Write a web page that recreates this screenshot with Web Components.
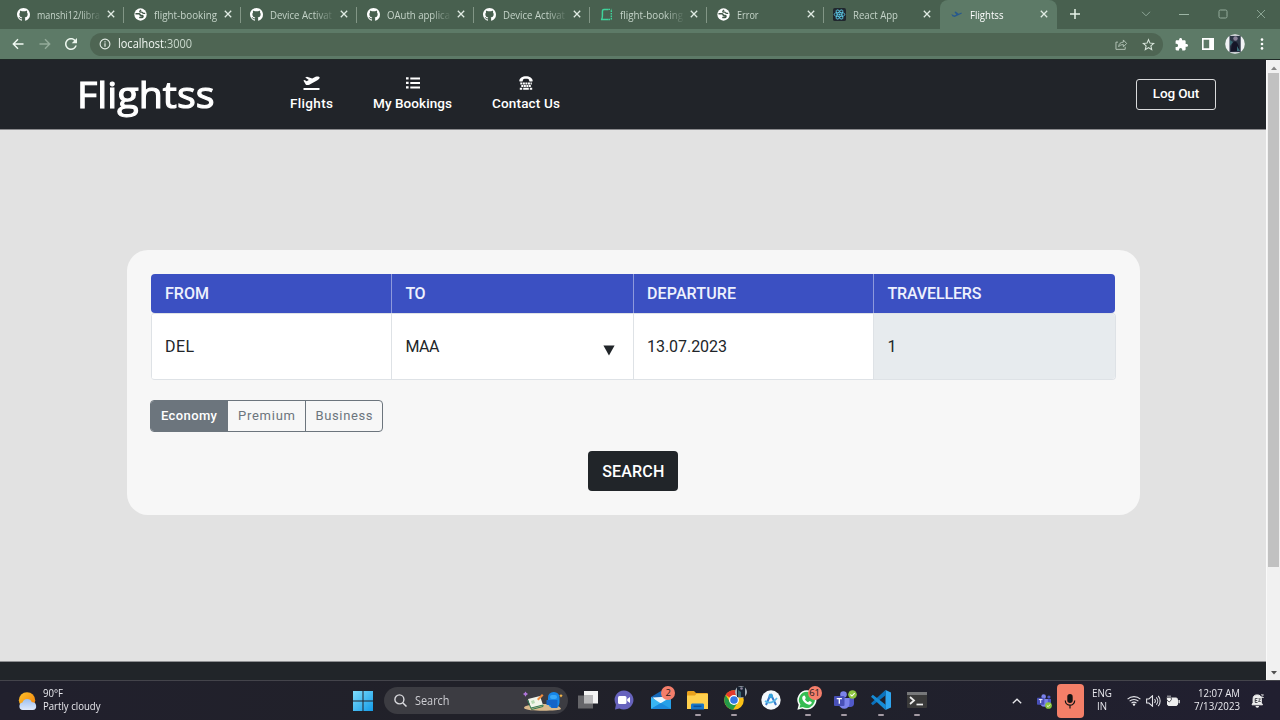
<!DOCTYPE html>
<html lang="en">
<head>
<meta charset="utf-8">
<title>Flightss</title>
<style>
html,body{margin:0;height:100%;overflow:hidden}
body{font-family:"Open Sans","Noto Sans",sans-serif;background:#e2e2e2}
</style>
</head>
<body>
<desktop-screen></desktop-screen>
<script>
const ICONS = {
github:['0 0 16 16','<path fill="#fff" d="M8 0C3.58 0 0 3.58 0 8c0 3.54 2.29 6.53 5.47 7.59.4.07.55-.17.55-.38 0-.19-.01-.82-.01-1.49-2.01.37-2.53-.49-2.69-.94-.09-.23-.48-.94-.82-1.13-.28-.15-.68-.52-.01-.53.63-.01 1.08.58 1.23.82.72 1.21 1.87.87 2.33.66.07-.52.28-.87.51-1.07-1.78-.2-3.64-.89-3.64-3.95 0-.87.31-1.59.82-2.15-.08-.2-.36-1.02.08-2.12 0 0 .67-.21 2.2.82a7.6 7.6 0 0 1 4 0c1.53-1.04 2.2-.82 2.2-.82.44 1.1.16 1.92.08 2.12.51.56.82 1.27.82 2.15 0 3.07-1.87 3.75-3.65 3.95.29.25.54.73.54 1.48 0 1.07-.01 1.93-.01 2.2 0 .21.15.46.55.38A8 8 0 0 0 16 8c0-4.42-3.58-8-8-8z"/>'],
globe:['0 0 16 16','<circle cx="8" cy="8" r="7.6" fill="#fff"/><path d="M1.800 7.200h4.400c1.300 0 1.300 2.200 2.600 2.200h1.400c1.400 0 1 2.300-.6 2.300H6.400" fill="none" stroke="#43594a" stroke-width="1.900"/><path d="M8.800 2.400C6.400 4 6.800 5.100 8.400 5.100h1.200c.8 0 .8 1.500 2.300 1.500h1.900" fill="none" stroke="#43594a" stroke-width="1.700"/>'],
glitch:['0 0 14 14','<path d="M9 1.5H4.5C2.5 1.5 2.6 3 2.6 5v2.5c0 3-.5 4.8-1.6 4.8h8" fill="none" stroke="#3fd39b" stroke-width="1.6"/><path d="M9 1.500h3.300M12.2 2.500v10M9 12.4h3" fill="none" stroke="#3fd39b" stroke-width="1.5" stroke-dasharray="1.8 1"/>'],
react:['0 0 14 14','<rect width="14" height="14" rx="2" fill="#20272e"/><g fill="none" stroke="#5ccbea" stroke-width=".9"><ellipse cx="7" cy="7" rx="5.7" ry="2.2"/><ellipse cx="7" cy="7" rx="5.7" ry="2.2" transform="rotate(60 7 7)"/><ellipse cx="7" cy="7" rx="5.7" ry="2.2" transform="rotate(120 7 7)"/></g><circle cx="7" cy="7" r="1.2" fill="#5ccbea"/>'],
planefav:['0 0 14 14','<path d="M1.500 6.5 4.500 8l2.300-.8-2-3 1.300-.4L9.300 6.200l2.500-1c.9-.4 1.6.2.5.9L5 9.8 2.500 9z" fill="#27598e"/>'],
x:['0 0 10 10','<path d="m1.8 1.8 6.4 6.4M8.2 1.800 1.8 8.200" stroke="currentColor" stroke-width="1.3"/>'],
plus:['0 0 10 10','<path d="M5 0v10M0 5h10" stroke="#e6f2e8" stroke-width="1.5"/>'],
chev:['0 0 10 6','<path d="m1 .8 4 4 4-4" fill="none" stroke="#8da696"/>'],
min:['0 0 10 10','<path d="M0 5.5h10" stroke="#9db5a5" stroke-width="1"/>'],
max:['0 0 10 10','<rect x="1" y="1" width="8" height="8" rx="1.4" fill="none" stroke="#93ab9b"/>'],
close:['0 0 10 10','<path d="m1 1 8 8M9 1 1 9" stroke="#93ab9b" stroke-width=".9"/>'],
back:['0 0 12 12','<path d="M11.5 6H1.5M6 1.3 1.3 6 6 10.7" fill="none" stroke="currentColor" stroke-width="1.4"/>'],
refresh:['4 4 16 16','<path fill="#edf7ef" d="M17.65 6.35C16.2 4.9 14.21 4 12 4c-4.42 0-7.99 3.58-7.99 8s3.57 8 7.99 8c3.73 0 6.84-2.55 7.73-6h-2.08c-.82 2.33-3.04 4-5.65 4-3.31 0-6-2.69-6-6s2.69-6 6-6c1.66 0 3.14.69 4.22 1.78L13 11h7V4l-2.35 2.35z"/>'],
info:['0 0 12 12','<circle cx="6" cy="6" r="4.9" fill="none" stroke="#e3ece5" stroke-width="1.1"/><path d="M6 5.2v3.5M6 3.2v1.2" stroke="#e3ece5" stroke-width="1.2"/>'],
share:['0 0 14 13','<path d="M3.2 4.5H1v7.8h10V9.5M4 9.4c.2-3.4 2-4.8 5-4.9V2.1L12.6 6 9 9.5V7.2c-2.3 0-3.8.5-5 2.2z" fill="none" stroke="#b7c8bb" stroke-width="1"/>'],
star:['2 2 20 19','<path fill="#d9e6dc" d="M22 9.24l-7.19-.62L12 2 9.19 8.63 2 9.24l5.46 4.73L5.82 21 12 17.27 18.18 21l-1.63-7.03L22 9.24zM12 15.4l-3.76 2.27 1-4.28-3.32-2.88 4.38-.38L12 6.1l1.71 4.04 4.38.38-3.32 2.88 1 4.28L12 15.4z"/>'],
ext:['1 1 22 22','<path fill="#fff" d="M20.5 11H19V7c0-1.1-.9-2-2-2h-4V3.5C13 2.12 11.88 1 10.5 1S8 2.12 8 3.5V5H4c-1.1 0-1.99.9-1.99 2v3.8H3.5c1.49 0 2.7 1.21 2.7 2.7s-1.21 2.7-2.7 2.7H2V20c0 1.1.9 2 2 2h3.8v-1.5c0-1.49 1.21-2.7 2.7-2.7 1.49 0 2.7 1.21 2.7 2.7V22H17c1.1 0 2-.9 2-2v-4h1.5c1.38 0 2.5-1.12 2.5-2.5S21.88 11 20.5 11z"/>'],
panel:['0 0 12 12','<path fill="#fff" fill-rule="evenodd" d="M0 0h12v12H0zM1.6 1.8h5.6v8.4H1.6z"/>'],
avatar:['0 0 20 20','<circle cx="10" cy="10" r="9.8" fill="#f2f3f6"/><path d="M4.5 1.8h11.2v16.4H4.5z" fill="#2b3444"/><circle cx="10.5" cy="4.5" r="2.2" fill="#8a8298"/><path d="M6 17.5c0-5 1-9 3.5-10 3 0 4.5 4 5 9z" fill="#151527"/><path d="m5 6 3 2-3 4zM12 12l3 5h-3z" fill="#386b75"/>'],
dots:['0 0 4 12','<g fill="#fff"><circle cx="2" cy="1.6" r="1.3"/><circle cx="2" cy="6" r="1.3"/><circle cx="2" cy="10.4" r="1.3"/></g>'],
takeoff:['0 0 17 14','<path fill="#fff" d="M.5 12.1h16V14H.5zM.4 4.500l1.300-.5 1.900 1.200 2.200-1.100L2.200 1.600 4 .7l5.200 1.700 3.400-1.600C14.200.1 16.200.3 16.600 1.200c.4.900-.8 2.200-2.200 3L6.300 8.700c-1 .5-2.800.6-3.400 0z"/>'],
list:['0 0 14 12','<path fill="#fff" d="M0 .3h2.600v2.300H0zM0 4.800h2.600v2.300H0zM0 9.300h2.600v2.300H0zM4.300.6H14v1.800H4.300zM4.300 5.100H14v1.800H4.300zM4.300 9.600H14v1.800H4.300z"/>'],
tty:['0 0 14 14','<path fill="#fff" d="M.3 4.700C.5 2 3.300.2 7 .2s6.500 1.800 6.700 4.500c0 .6-.4.900-.9.900h-2.300L9.700 3.200C8 2.700 6 2.700 4.300 3.200l-.8 2.400H1.200c-.5 0-.9-.3-.9-.9z"/><path d="M1.300 7.500h11.500M2.300 10h9.500" stroke="#fff" stroke-width="1.9" stroke-dasharray="2 .55"/><path d="M.8 12.800h2.400m1 0h5.600m1 0h2.400" stroke="#fff" stroke-width="1.9"/>'],
weather:['0 0 20 20','<defs><linearGradient id="s" x2="1" y2="1"><stop stop-color="#ffc32b"/><stop offset="1" stop-color="#f07d0a"/></linearGradient><linearGradient id="c" x2="0" y2="1"><stop stop-color="#9fc1f2"/><stop offset="1" stop-color="#dfe9fb"/></linearGradient></defs><circle cx="9.500" cy="9.300" r="8.600" fill="url(#s)"/><path d="M5 19.500a4 4 0 0 1-.3-7.900 5.200 5.200 0 0 1 9.800-.3 4.100 4.100 0 0 1 1 8.200z" fill="url(#c)"/>'],
win:['0 0 20 20','<defs><linearGradient id="w" x2="1" y2="1"><stop stop-color="#7fdcfc"/><stop offset="1" stop-color="#129be8"/></linearGradient></defs><path fill="url(#w)" d="M0 0h9.500v9.500H0zM10.500 0H20v9.500h-9.500zM0 10.500h9.500V20H0zM10.500 10.500H20V20h-9.500z"/>'],
search:['0 0 13 13','<circle cx="5.400" cy="5.400" r="4.500" fill="none" stroke="#dadade" stroke-width="1.400"/><path d="m8.700 8.700 3.800 3.800" stroke="#dadade" stroke-width="1.500"/>'],
art:['0 0 41 20','<path d="M2 17c0-3 8-3 15-4h8c5 0 14 2 14 5 0 2-35 3-37-1z" fill="#d9b98c"/><path d="m6 8 12-3 3 9-12 3z" fill="#f2f5ea"/><path d="m9 17 12-3v1.500L9.500 18.500 5.500 9" fill="none" stroke="#2f7a54" stroke-width="1"/><path d="m9 10 3-1 1 3-3 1z" fill="#b7d9b2"/><path d="m15 8 5-5 1.500 1.500-5 5z" fill="#f08c3e"/><path d="m3.500.5 1 1.600 1.600 1-1.600 1-1 1.600-1-1.600-1.600-1 1.600-1z" fill="#b277dc"/><rect x="26" y="1" width="11.500" height="16" rx="5.500" fill="#1686e8"/><path d="M24.500 9v5h4l1 3h6V9" fill="#1464c8"/><rect x="28" y="4" width="7" height="4" rx="2" fill="#3aa8f7"/><path d="m39 3 .7 1 1 .7-1 .7-.7 1-.7-1-1-.7 1-.7z" fill="#f6b74a"/>'],
task:['0 0 20 20','<rect x="6" y="1" width="14" height="12.500" fill="#f3f3f3"/><rect x="0" y="5.500" width="15" height="13" fill="#6d6d70" opacity=".9"/><rect x="6" y="5.500" width="9" height="8" fill="#b8b8ba"/>'],
chat:['0 0 20 20','<path d="M10 .5a9.500 9.500 0 1 1-4.500 17.900L1 19.400l.9-4.600A9.500 9.500 0 0 1 10 .5z" fill="#6763bd"/><rect x="4" y="6" width="8.500" height="8" rx="1.500" fill="#fff"/><path d="m13.200 9 2.800-2v6l-2.800-2z" fill="#fff"/>'],
mail:['0 0 20 18','<path d="m0 6 10-6 10 6v11.500H0z" fill="#1568b8"/><path d="m1.500 6.500 17-1v5l-8.500 5z" fill="#e9f6fd"/><path d="m0 6 10 6.500L0 18z" fill="#39b6f3"/><path d="M20 6 0 18h20z" fill="#26a0e8"/><path d="m10 12 10 6H0z" fill="#1b8add"/>'],
folder:['0 0 21 19','<path d="M0 1.500C0 .6.500 0 1.500 0H7l2 2h10.500c1 0 1.500.6 1.500 1.500V16H0z" fill="#e9a11c"/><path d="M0 4.500h8l1.500-1.700H21V18H0z" fill="#ffd04d"/><path d="M4 18.500V14c0-1 .7-1.500 1.500-1.500h10c1 0 1.500.5 1.500 1.500v4.500z" fill="#1876c9"/><path d="M6.500 15.300h8" stroke="#0a4f98" stroke-width="1.500"/>'],
chrome:['0 0 20 20','<circle cx="10" cy="10" r="9.800" fill="#fbc116"/><path d="M10 10 1.600 5A9.800 9.800 0 0 1 18.500 5z" fill="#e33b2e"/><path d="M1.600 5A9.800 9.800 0 0 0 9 19.700L14 12l-8 0z" fill="#249a48"/><path d="M10 5h8.500L14 13l-4-1z" fill="#fbc116"/><circle cx="10" cy="10" r="4.900" fill="#fff"/><circle cx="10" cy="10" r="3.800" fill="#3478e5"/>'],
mini:['0 0 12 12','<circle cx="6" cy="6" r="6" fill="#a9b3bb"/><path d="M2 .8h8v10.400H2z" fill="#182332"/><path d="m3 4 3 2v5H3z" fill="#3b6973"/><circle cx="6.500" cy="2.500" r="1.300" fill="#8d849b"/>'],
astudio:['0 0 20 20','<circle cx="10" cy="10" r="9.700" fill="#f4f9fc"/><path d="M9.700 4 5 15m4.700-11L15 15" fill="none" stroke="#3979c9" stroke-width="2"/><circle cx="9.800" cy="6" r="2.300" fill="#36a3dc"/><path d="M4 11c4 3 8 2 12-3" stroke="#54b9e8" stroke-width="1.700" fill="none"/>'],
whats:['0 0 20 20','<path d="M10 .3a9.600 9.600 0 1 1-4.600 18.100L.4 19.700l1.300-4.900A9.600 9.600 0 0 1 10 .3z" fill="#f7fff8"/><path d="M10 1.800a8.100 8.100 0 1 1-4.300 15.100l-3.200.8.9-3.100A8.100 8.100 0 0 1 10 1.800z" fill="#35bd52"/><path d="M7.300 5.500c.5 0 1.500 2.100 1.500 2.500s-.8 1-.8 1.300c.6 1.400 1.800 2.400 3.100 3 .4 0 1-1.200 1.400-1.200s2.300 1 2.300 1.400c0 1.300-1.500 2.300-2.800 2.200C8.500 14.300 5 10.500 5.200 7.800c.1-1.200 1-2.300 2.100-2.300z" fill="#fff"/>'],
teams:['0 0 20 18','<circle cx="9.500" cy="3.500" r="3.300" fill="#7b83eb"/><circle cx="17" cy="4" r="2.300" fill="#5059c9"/><path d="M13 7h7v5.500c0 2-1.500 3.500-3.500 3.500H13z" fill="#5059c9"/><path d="M5 7h10.500v5.500a5.200 5.200 0 0 1-10.500 0z" fill="#7b83eb"/><rect y="5" width="10.500" height="10" rx="1" fill="#4850b7"/><path d="M2.700 7.700h5.200M5.300 7.700v5" stroke="#fff" stroke-width="1.300"/>'],
check:['0 0 10 10','<circle cx="5" cy="5" r="4.800" fill="#8cc63f"/><path d="m2.700 5 1.700 1.700 3-3.200" fill="none" stroke="#fff" stroke-width="1.200"/>'],
code:['0 0 20 20','<path d="M14.500 0 20 2.500v15L14.500 20z" fill="#2fa5ef"/><path d="M14.500 0 0 13.300l1.800 1.900L15 5z" fill="#0b72bd"/><path d="M14.500 20 0 6.700l1.800-1.900L15 15z" fill="#168bd5"/>'],
term:['0 0 20 16','<rect width="20" height="16" rx="1" fill="#3a3a3a"/><path d="M0 0h20v3H0z" fill="#77787a"/><path d="m3 5 4 3.500L3 12" fill="none" stroke="#eee" stroke-width="1.800"/><path d="M9.500 12.500H16" stroke="#eee" stroke-width="1.700"/>'],
up:['0 0 10 6','<path d="m.8 5.200 4.200-4 4.200 4" fill="none" stroke="#e8e8ec" stroke-width="1.300"/>'],
mic:['0 0 12 16','<rect x="3.300" y="1" width="5.400" height="9" rx="2.700" fill="#151515"/><path d="M1.300 7.500a4.700 4.700 0 0 0 9.400 0M6 12v3.500" fill="none" stroke="#151515" stroke-width="1.200"/>'],
wifi:['0 0 14 11','<g fill="none" stroke="#e5e5ea" stroke-width="1.100"><path d="M.6 4.200a9.300 9.300 0 0 1 12.800 0M2.600 6.200a6.500 6.500 0 0 1 8.800 0M4.500 8.200a3.800 3.800 0 0 1 5 0"/></g><circle cx="7" cy="9.600" r="1.200" fill="#eee"/>'],
vol:['0 0 15 12','<path d="M.6 4h2.300L6.500.8v10.400L2.900 8H.6zM8.500 4a3 3 0 0 1 0 4M10.300 2.300a5.500 5.500 0 0 1 0 7.400M12.200.8a8 8 0 0 1 0 10.400" fill="none" stroke="#e1e1e6" stroke-width="1.100"/>'],
bat:['0 0 14 12','<rect x="1.500" y="3" width="10" height="7.500" rx="1.500" fill="#eee" stroke="#eee"/><path d="M12.500 5h1.300v3.300h-1.300z" fill="#eee"/><path d="M.3 2.600h5v2.200L3.300 7 .8 5z" fill="#fff" stroke="#22222c" stroke-width=".8"/><path d="M2 .5v2M4 .5v2" stroke="#fff" stroke-width=".9"/>'],
bell:['0 0 13 14','<path d="M1 10.800h10.500L10.300 8.800V5a4.100 4.100 0 0 0-8.200 0v3.800z" fill="#eee" stroke="#eee"/><path d="M4.500 12h3.600a1.800 1.800 0 0 1-3.600 0" fill="#eee"/><path d="M6.500 4.500H4.200v4h2.300M4.200 6.500h2" fill="none" stroke="#22222c" stroke-width=".8"/><path d="M7.400 4.800h2L7.500 7.500h2.300" fill="none" stroke="#22222c" stroke-width=".7"/><path d="M10 .8h2.500L10 3.500h2.800" fill="none" stroke="#eee" stroke-width=".8"/>'],
sbup:['0 0 8 4','<path d="m1 4 3-3.500L7 4z" fill="#858585"/>'],
sbdn:['0 0 8 4','<path d="m1 0 3 3.500L7 0z" fill="#505050"/>'],
tri:['0 0 12 11','<path d="M.4.500h11.200L6 10.500z" fill="#212529"/>']
};
function define(name, css, html, after){
  customElements.define(name, class extends HTMLElement{
    connectedCallback(){
      if(this.shadowRoot) return;
      const root=this.attachShadow({mode:'open'});
      root.innerHTML='<style>*{box-sizing:border-box}'+css+'</style>'+(typeof html==='function'?html(this):html);
      if(after) after(this,root);
    }
  });
}

define('desktop-screen',':host{display:grid;grid-template-rows:60px 620px 40px;width:1280px;height:720px;overflow:hidden}.view{display:grid;grid-template-columns:1266px 14px;overflow:hidden}',
 '<browser-chrome></browser-chrome><div class="view"><flight-page></flight-page><scroll-bar></scroll-bar></div><task-bar></task-bar>');

/* Browser window frame */
define('browser-chrome',`:host{display:grid;grid-template-rows:29px 30px 1px;background:#1f2926;color:#d9e5dc}
.strip{display:flex;align-items:center;background:#48604f;padding-left:7.500px;overflow:hidden}
.strip ui-icon[name=plus]{margin:-1px 0 0 13px}
.win{display:flex;margin-left:auto;height:26px;align-items:center;padding-bottom:1px}
.win span{width:38.300px;display:flex;justify-content:center}
.bar{display:flex;align-items:center;background:#5d7a67}
.nav{width:90px;display:flex;align-items:center;padding-left:12px;gap:14.500px}
.url{flex:none;width:1073px;height:23px;border-radius:12px;background:#4e6553;display:flex;align-items:center;padding:0 8px 0 9px;font-size:12px;line-height:16px}
.url fit-text{margin:-1px 0 0 7px}
.url ui-icon[name=share]{margin-left:auto}.url ui-icon[name=star]{margin-left:14px}
.ext{display:flex;align-items:center;margin-left:12px}`,
`<div class="strip">
<browser-tab icon="github" w="63">manshi12/libra</browser-tab><browser-tab icon="globe" w="63" plain>flight-booking</browser-tab><browser-tab icon="github" w="62">Device Activat</browser-tab><browser-tab icon="github" w="63">OAuth applica</browser-tab><browser-tab icon="github" w="62">Device Activat</browser-tab><browser-tab icon="glitch" w="63">flight-booking</browser-tab><browser-tab icon="globe" w="21.500" plain>Error</browser-tab><browser-tab icon="react" w="45" plain last>React App</browser-tab><browser-tab icon="planefav" w="33.500" plain active>Flightss</browser-tab>
<ui-icon name="plus" w="10" h="10"></ui-icon>
<div class="win"><span><ui-icon name="chev" w="10" h="6"></ui-icon></span><span><ui-icon name="min" w="10" h="10"></ui-icon></span><span><ui-icon name="max" w="10" h="10"></ui-icon></span><span><ui-icon name="close" w="10" h="10"></ui-icon></span></div></div>
<div class="bar"><div class="nav"><ui-icon name="back" w="12" h="12" style="color:#f2faf4"></ui-icon><ui-icon name="back" w="12" h="12" style="color:#94ac9b;transform:scaleX(-1)"></ui-icon><ui-icon name="refresh" w="12" h="12"></ui-icon></div>
<div class="url"><ui-icon name="info" w="12" h="12"></ui-icon><fit-text scale w="74"><span style="color:#f2f8f3">localhost</span><span style="color:#c9d8cc">:3000</span></fit-text><ui-icon name="share" w="13" h="12"></ui-icon><ui-icon name="star" w="13" h="13"></ui-icon></div>
<div class="ext"><ui-icon name="ext" w="13" h="13"></ui-icon><ui-icon name="panel" w="12" h="12" style="margin-left:14px"></ui-icon><ui-icon name="avatar" w="20" h="20" style="margin-left:11px"></ui-icon><ui-icon name="dots" w="4" h="12" style="margin-left:15px"></ui-icon></div></div><div></div>`);

define('browser-tab',`:host{flex:none;box-sizing:border-box;display:grid;grid-template-columns:13px 63px 10px;column-gap:7px;align-items:center;width:116.550px;height:29px;padding:0 0 1px 9.500px;font-size:11px;line-height:27px;color:#c5d4c9;position:relative}
:host{width:116.600px}
:host([active]){background:#5d7a67;border-radius:8px 8px 0 0;color:#fff}
:host(:not([active]):not([last]))::after{content:"";position:absolute;right:0;top:7px;width:1px;height:16px;background:#829686}
.t{display:flex;overflow:hidden;-webkit-mask-image:linear-gradient(90deg,#000 70%,transparent 103%)}
:host([plain]) .t{-webkit-mask-image:none}ui-icon[name=x]{margin-left:-2px;color:#e0ebe3}`,
 h=>`<ui-icon name="${h.getAttribute('icon')}" w="13" h="13"></ui-icon><div class="t"><fit-text scale w="${h.getAttribute('w')}">${h.textContent}</fit-text></div><ui-icon name="x" w="10" h="10"></ui-icon>`);

/* Web page */
define('flight-page',`:host{display:grid;grid-template-rows:70px 1fr 19px;background:#e2e2e2;font-family:Roboto,"Noto Sans",sans-serif;overflow:hidden}
.footer{background:#212529;border-top:1px solid #8e8f92}main{padding:119.500px 0 0 127px}`,
 '<nav-bar></nav-bar><main><search-card></search-card></main><div class="footer"></div>');

define('nav-bar',`:host{display:flex;background:#212429;border-bottom:1px solid #8a8a8d;color:#fff;height:70px}
.logo{font:400 37px/44px "Open Sans",sans-serif;-webkit-text-stroke:1.100px #fff;padding:12px 0 0 76.500px;width:290px}
.links{display:flex;gap:40px;padding-top:16px}
.out{margin:19px 50px 0 auto;width:80px;height:31px;border:1px solid #d9dadb;border-radius:3px;display:flex;justify-content:center;align-items:center;font:500 13.500px/29px Roboto,sans-serif;padding-bottom:2px}`,
`<div class="logo"><fit-text scale w="137.500">Flightss</fit-text></div><div class="links"><nav-item icon="takeoff" iw="17" w="43">Flights</nav-item><nav-item icon="list" iw="14" w="79">My Bookings</nav-item><nav-item icon="tty" iw="14" w="68">Contact Us</nav-item></div><div class="out"><fit-text w="46.500">Log Out</fit-text></div>`);
define('nav-item',':host{display:flex;flex-direction:column;align-items:center;gap:3px;font-size:13.500px;font-weight:500;line-height:20px}ui-icon{height:14px}',
 h=>`<ui-icon name="${h.getAttribute('icon')}" w="${h.getAttribute('iw')}" h="14"></ui-icon><fit-text w="${h.getAttribute('w')}">${h.textContent}</fit-text>`);

define('search-card',`:host{display:block;width:1012.500px;height:265.500px;border-radius:21px;background:#f7f7f7;padding:24.500px 24px 0;box-sizing:border-box;color:#212529}
.row{display:grid;grid-template-columns:240px 242px 240px 1fr;font-size:16px}
.row>div{display:flex;align-items:center;padding-left:13px;border-left:1px solid #dee2e6}
.row>div:nth-child(2){padding-left:13.500px}.row>div:nth-child(4){padding-left:13.500px}
.head{width:964px;height:39px;background:#3b50c2;color:#eef1fd;border-radius:4px;font-weight:500;overflow:hidden}
.head>div{border-color:#8d99dc}.head>div:first-child{border-color:transparent}
.body{width:965px;height:67px;background:#fff;border:1px solid #dee2e6;border-left:0;border-radius:4px;overflow:hidden}
.body .off{background:#e7ebee}.body ui-icon{margin:7px 18.500px 0 auto}
.group{display:flex;width:233px;height:32px;margin:20px 0 0 -1px;border:1px solid #6c757d;border-radius:4px;overflow:hidden;color:#6c757d;font-size:13px}
.group div{flex:none;width:78px;display:flex;align-items:center;justify-content:center;border-left:1px solid #6c757d;padding-bottom:2px}
.group div:first-child{width:76px;background:#6c757d;color:#fff;font-weight:500;border:0}
.group div:last-child{width:77px}
.go{margin:19px auto 0;width:90px;height:40px;background:#212529;color:#fff;border-radius:4px;display:flex;align-items:center;justify-content:center;font-size:16px;font-weight:500}`,
`<div class="row head"><div><fit-text w="44">FROM</fit-text></div><div><fit-text w="20">TO</fit-text></div><div><fit-text w="89">DEPARTURE</fit-text></div><div><fit-text w="94">TRAVELLERS</fit-text></div></div>
<div class="row body"><div><fit-text w="29">DEL</fit-text></div><div><fit-text w="34">MAA</fit-text><ui-icon name="tri" w="12" h="11"></ui-icon></div><div><fit-text w="80">13.07.2023</fit-text></div><div class="off">1</div></div>
<div class="group"><div><fit-text w="56">Economy</fit-text></div><div><fit-text w="57">Premium</fit-text></div><div><fit-text w="57">Business</fit-text></div></div>
<div class="go"><fit-text w="62">SEARCH</fit-text></div>`);

define('scroll-bar',':host{display:flex;flex-direction:column;align-items:center;background:#f1f1f1;border-left:1px solid #fafafa}.up{height:13px;padding-top:6px}.thumb{width:11px;height:494px;background:#c1c1c1}ui-icon{display:block}.dn{margin-top:auto;padding-bottom:5px}',
 '<div class="up"><ui-icon name="sbup" w="8" h="4"></ui-icon></div><div class="thumb"></div><div class="dn"><ui-icon name="sbdn" w="8" h="4"></ui-icon></div>');

/* System taskbar */
define('task-bar',`:host{display:flex;align-items:center;background:linear-gradient(90deg,#21202d,#212129 35%,#20212b 65%,#211f30);border-top:1px solid #44444b;color:#e9e9ee;font-size:10.500px;line-height:13px;overflow:hidden}
.weather{display:flex;width:353px;padding-left:18px;gap:6px;align-items:center}.weather div,.clock,.lang{display:flex;flex-direction:column;margin-top:-1px}
.search{flex:none;display:flex;align-items:center;width:184px;height:27px;border-radius:14px;background:#3c3c42;margin-left:11px;padding:0 5px 0 10px;font-size:12px;line-height:18px;color:#ceced3}
.search fit-text{margin-left:8px}.search ui-icon[name=art]{margin-left:auto}
.apps{display:flex;margin-left:1.500px}
.tray{display:flex;align-items:center;flex:1;padding-left:76.500px}
.micbox{width:27px;height:34px;border-radius:4px;background:#f47f68;display:flex;align-items:center;justify-content:center;margin-left:6px}
.lang{align-items:center;width:20px;margin-left:8.500px}.clock{align-items:flex-end;width:47px;margin-left:12.500px}.mini{position:relative;display:flex;margin-left:15px}.mini ui-icon+ui-icon{position:absolute;right:-1px;bottom:-2px}`,
`<div class="weather"><ui-icon name="weather" w="19" h="20"></ui-icon><div><fit-text scale w="20">90°F</fit-text><fit-text scale w="57.500">Partly cloudy</fit-text></div></div>
<ui-icon name="win" w="20" h="20"></ui-icon>
<div class="search"><ui-icon name="search" w="13" h="13"></ui-icon><fit-text scale w="34.500">Search</fit-text><ui-icon name="art" w="41" h="20"></ui-icon></div>
<div class="apps"><task-app icon="task"></task-app><task-app icon="chat"></task-app><task-app icon="mail" h="18" badge="2"></task-app><task-app icon="folder" w="21" h="19" run></task-app><task-app icon="chrome" over="mini" run></task-app><task-app icon="astudio"></task-app><task-app icon="whats" badge="61" run></task-app><task-app icon="teams" h="18" over="check" run></task-app><task-app icon="code" run></task-app><task-app icon="term" h="16" run></task-app></div>
<div class="tray"><ui-icon name="up" w="10" h="6"></ui-icon><div class="mini"><ui-icon name="teams" w="14" h="13"></ui-icon><ui-icon name="check" w="7" h="7"></ui-icon></div><div class="micbox"><ui-icon name="mic" w="12" h="16"></ui-icon></div><div class="lang"><fit-text scale w="20">ENG</fit-text><fit-text scale w="10">IN</fit-text></div><ui-icon name="wifi" w="14" h="11" style="margin-left:14.500px"></ui-icon><ui-icon name="vol" w="15" h="12" style="margin-left:5px"></ui-icon><ui-icon name="bat" w="14" h="12" style="margin-left:5.500px"></ui-icon><div class="clock"><fit-text scale w="42">12:07 AM</fit-text><fit-text scale w="46">7/13/2023</fit-text></div><ui-icon name="bell" w="13" h="14" style="margin-left:11px"></ui-icon></div>`);
define('task-app',`:host{position:relative;display:flex;align-items:center;justify-content:center;width:36.600px;height:39px;margin-top:-1px}
.badge,.over{position:absolute;left:18.500px;top:5px}.badge{width:14px;height:14px;border-radius:7px;background:#f47e6b;color:#251b1b;font-size:9.500px;line-height:14px;text-align:center}.over{left:19.500px}.over.check{left:22px;top:9px}
:host([run])::after{content:"";position:absolute;left:15.500px;bottom:4px;width:6px;height:2px;border-radius:1px;background:#a49ba4}`,
 h=>{const b=h.getAttribute('badge'),o=h.getAttribute('over');return `<ui-icon name="${h.getAttribute('icon')}" w="${h.getAttribute('w')||20}" h="${h.getAttribute('h')||20}"></ui-icon>${b?`<span class="badge">${b}</span>`:''}${o?`<span class="over ${o}"><ui-icon name="${o}" w="${o==='mini'?12:9}" h="${o==='mini'?12:9}"></ui-icon></span>`:''}`});

define('ui-icon',':host{display:flex;flex:none;align-items:center;justify-content:center}svg{display:block}',h=>{
 const i=ICONS[h.getAttribute('name')];return `<svg viewBox="${i[0]}" width="${h.getAttribute('w')}" height="${h.getAttribute('h')}">${i[1]}</svg>`});

/* A one-line label set to an exact width, by tracking or, with the scale attribute, by condensing */
define('fit-text',':host{display:inline-block;flex:none;white-space:nowrap}span{display:inline-block;transform-origin:0 50%}','<span><slot></slot></span>',(h,root)=>{
 const w=+h.getAttribute('w'),s=root.querySelector('span');
 const natural=s.getBoundingClientRect().width;
 if(h.hasAttribute('scale')) s.style.transform='scaleX('+(w/natural).toFixed(4)+')';
 else h.style.letterSpacing=((w-natural)/(h.textContent.length-1)).toFixed(3)+'px';
 h.style.width=w+'px';
});
</script>
</body>
</html>
